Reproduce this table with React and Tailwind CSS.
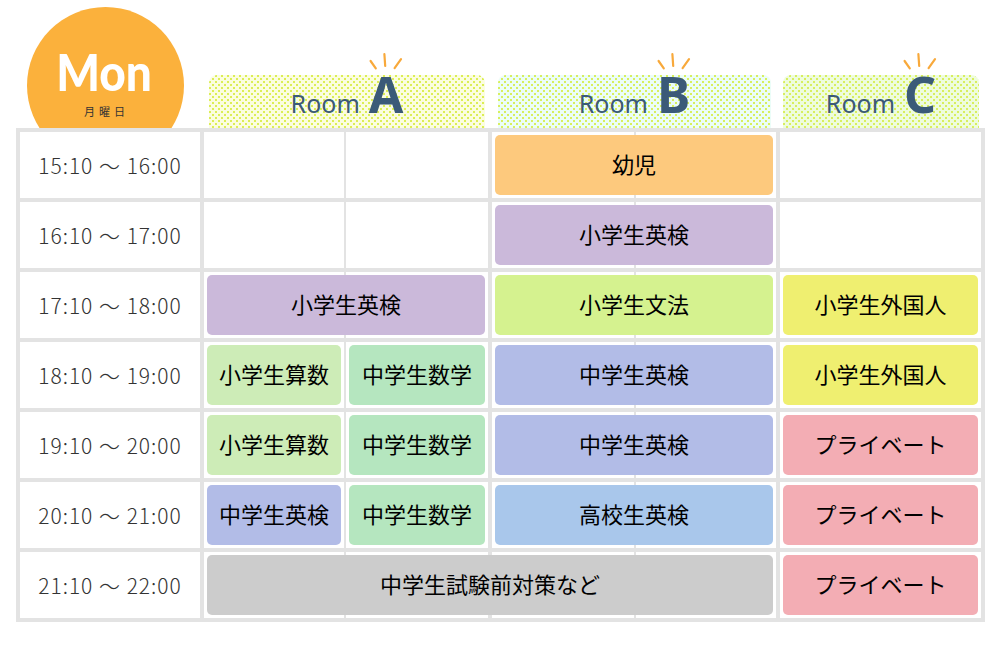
import React from 'react';

const COLS = {
  t: 'col-start-1 col-end-2',
  a1: 'col-start-3 col-end-4',
  a2: 'col-start-5 col-end-6',
  b1: 'col-start-7 col-end-8',
  b2: 'col-start-9 col-end-10',
  c: 'col-start-11 col-end-12',
  a: 'col-start-3 col-end-6',
  b: 'col-start-7 col-end-10',
  ab: 'col-start-3 col-end-10',
};

const ROWS = ['row-start-1', 'row-start-2', 'row-start-3', 'row-start-4', 'row-start-5', 'row-start-6', 'row-start-7'];

const COLORS = {
  orange: 'bg-[#fdc97d]',
  purple: 'bg-[#cbb9da]',
  lime: 'bg-[#d5f28f]',
  yellow: 'bg-[#efef70]',
  mint: 'bg-[#cdecb7]',
  green: 'bg-[#b5e6bf]',
  blue: 'bg-[#b2bce7]',
  sky: 'bg-[#a9c7eb]',
  pink: 'bg-[#f3adb4]',
  gray: 'bg-[#cccccc]',
};

const schedule = [
  { time: '15:10 〜 16:00', blocks: [{ col: 'b', text: '幼児', color: 'orange' }] },
  { time: '16:10 〜 17:00', blocks: [{ col: 'b', text: '小学生英検', color: 'purple' }] },
  {
    time: '17:10 〜 18:00',
    blocks: [
      { col: 'a', text: '小学生英検', color: 'purple' },
      { col: 'b', text: '小学生文法', color: 'lime' },
      { col: 'c', text: '小学生外国人', color: 'yellow' },
    ],
  },
  {
    time: '18:10 〜 19:00',
    blocks: [
      { col: 'a1', text: '小学生算数', color: 'mint' },
      { col: 'a2', text: '中学生数学', color: 'green' },
      { col: 'b', text: '中学生英検', color: 'blue' },
      { col: 'c', text: '小学生外国人', color: 'yellow' },
    ],
  },
  {
    time: '19:10 〜 20:00',
    blocks: [
      { col: 'a1', text: '小学生算数', color: 'mint' },
      { col: 'a2', text: '中学生数学', color: 'green' },
      { col: 'b', text: '中学生英検', color: 'blue' },
      { col: 'c', text: 'プライベート', color: 'pink' },
    ],
  },
  {
    time: '20:10 〜 21:00',
    blocks: [
      { col: 'a1', text: '中学生英検', color: 'blue' },
      { col: 'a2', text: '中学生数学', color: 'green' },
      { col: 'b', text: '高校生英検', color: 'sky' },
      { col: 'c', text: 'プライベート', color: 'pink' },
    ],
  },
  {
    time: '21:10 〜 22:00',
    blocks: [
      { col: 'ab', text: '中学生試験前対策など', color: 'gray' },
      { col: 'c', text: 'プライベート', color: 'pink' },
    ],
  },
];

const Sparkle = () => (
  <svg
    className="absolute left-1/2 -translate-x-1/2 -top-[16px]"
    width="34"
    height="17"
    viewBox="0 0 34 17"
    fill="none"
    stroke="#f8a93b"
    strokeWidth="2.2"
    strokeLinecap="round"
  >
    <path d="M1.6 8 L6.8 15.4" />
    <path d="M15.4 1.2 L16.2 13" />
    <path d="M32 6.2 L25.6 15.2" />
  </svg>
);

// dotted header panel: two offset layers of 2px squares
const RoomHeader = ({ letter, className }) => (
  <div className={`h-[53px] rounded-t-[8px] flex items-end justify-center pb-[9px] [background-size:6px_6px] [background-position:0_0,3px_3px] ${className}`}>
    <div className="flex items-baseline gap-[9px] text-[#3b5a78] font-['Noto_Sans',sans-serif]">
      <span className="text-[25px] leading-none">Room</span>
      <span className="relative text-[50px] font-bold leading-none">
        <Sparkle />
        {letter}
      </span>
    </div>
  </div>
);

export default function App() {
  return (
    <div className="w-[997px] h-[650px] bg-white font-['Noto_Sans_CJK_JP',sans-serif]">
      {/* header */}
      <div className="h-[128px] overflow-hidden flex pl-[27px]">
        <div className="w-[157px] h-[157px] mt-[7px] shrink-0 rounded-full bg-[#fbb13c] flex flex-col items-center pt-[45px]">
          <span className="block h-[40px] pr-[3px] text-white text-[46px] font-black leading-[40px] scale-y-[1.12] font-['Lato',sans-serif]">Mon</span>
          <span className="block mt-[14px] text-[11px] leading-[11px] tracking-[4px] pl-[2px] text-[#333]">月曜日</span>
        </div>
        <div className="self-end flex ml-[25px]">
          <RoomHeader
            letter="A"
            className="w-[276px] bg-[#fbfde0] [background-image:conic-gradient(at_2px_2px,transparent_75%,#dcee55_0),conic-gradient(at_2px_2px,transparent_75%,#dcee55_0)]"
          />
          <RoomHeader
            letter="B"
            className="w-[273px] ml-[13px] bg-[#ebfdf8] [background-image:conic-gradient(at_2px_2px,transparent_75%,#d8ef5e_0),conic-gradient(at_2px_2px,transparent_75%,#d8ef5e_0)]"
          />
          <RoomHeader
            letter="C"
            className="w-[196px] ml-[12px] bg-[#eefcdd] [background-image:conic-gradient(at_2px_2px,transparent_75%,#d8ef5e_0),conic-gradient(at_2px_2px,transparent_75%,#d8ef5e_0)]"
          />
        </div>
      </div>

      {/* timetable */}
      <div className="ml-[16px] w-[969px] p-[4px] bg-[#e3e3e3] grid grid-cols-[180px_4px_140px_2px_142px_4px_142px_2px_140px_4px_201px] grid-rows-[repeat(7,66px)] gap-y-[4px]">
        {schedule.map((row, i) => (
          <React.Fragment key={i}>
            <div className={`${ROWS[i]} ${COLS.t} bg-white flex items-center justify-center text-[21px] leading-none tracking-[1px] font-light text-[#333]`}>
              {row.time}
            </div>
            <div className={`${ROWS[i]} ${COLS.a1} bg-white`} />
            <div className={`${ROWS[i]} ${COLS.a2} bg-white`} />
            <div className={`${ROWS[i]} ${COLS.b1} bg-white`} />
            <div className={`${ROWS[i]} ${COLS.b2} bg-white`} />
            <div className={`${ROWS[i]} ${COLS.c} bg-white`} />
            {row.blocks.map((b, j) => (
              <div
                key={j}
                className={`${ROWS[i]} ${COLS[b.col]} ${COLORS[b.color]} m-[3px] pb-[4px] rounded-[5px] flex items-center justify-center text-[22px] leading-none text-black`}
              >
                {b.text}
              </div>
            ))}
          </React.Fragment>
        ))}
      </div>
    </div>
  );
}
